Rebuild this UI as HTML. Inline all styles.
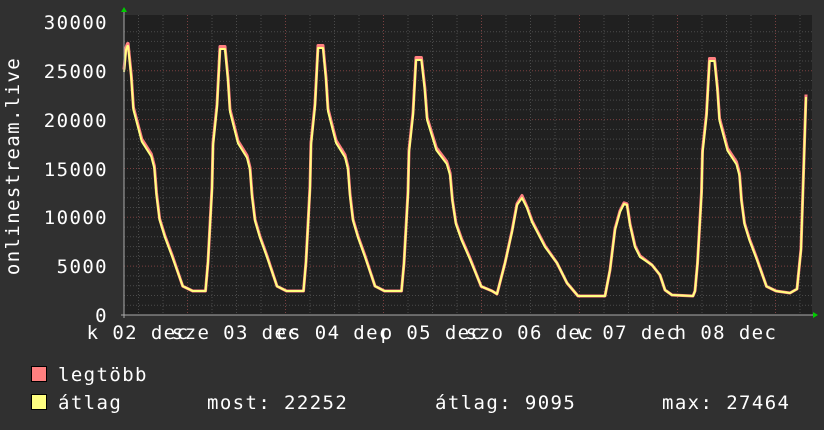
<!DOCTYPE html>
<html><head><meta charset="utf-8"><style>
html,body{margin:0;padding:0;background:#303030;width:824px;height:430px;overflow:hidden}
svg{display:block}
text{font-family:"DejaVu Sans Mono","Liberation Mono",monospace;font-size:19px;letter-spacing:1.4px;fill:#fff}
</style></head><body>
<svg id="g" width="824" height="430" xmlns="http://www.w3.org/2000/svg">
<rect x="0" y="0" width="824" height="430" fill="#303030"/>
<rect x="124" y="15" width="688" height="300" fill="#202020"/>
<g id="grid"></g>
<path id="mx" fill="none" stroke="#ff8080" stroke-width="3" stroke-linejoin="round"/>
<path id="av" fill="none" stroke="#ffff80" stroke-width="2" stroke-linejoin="round"/>
<line x1="121" y1="315" x2="814" y2="315" stroke="#aaa" stroke-width="1"/>
<line x1="124" y1="318" x2="124" y2="12" stroke="#aaa" stroke-width="1"/>
<polygon points="121,12 127,12 124,7" fill="#00cc00"/>
<polygon points="813,312 813,318 818,315" fill="#00cc00"/>
<g text-anchor="end">
<text x="108" y="29">30000</text>
<text x="108" y="78">25000</text>
<text x="108" y="127">20000</text>
<text x="108" y="176">15000</text>
<text x="108" y="224">10000</text>
<text x="108" y="273">5000</text>
<text x="108" y="322">0</text>
</g>
<text transform="translate(19,166) rotate(-90)" text-anchor="middle">onlinestream.live</text>
<g text-anchor="middle">
<text x="138" y="339">k 02 dec</text>
<text x="236" y="339">sze 03 dec</text>
<text x="334" y="339">cs 04 dec</text>
<text x="432" y="339">p 05 dec</text>
<text x="530" y="339">szo 06 dec</text>
<text x="628" y="339">v 07 dec</text>
<text x="726" y="339">h 08 dec</text>
</g>
<rect x="31.5" y="366.5" width="15" height="15" fill="#ff8080" stroke="#000"/>
<rect x="31.5" y="394.5" width="15" height="15" fill="#ffff80" stroke="#000"/>
<text x="58" y="381">legtöbb</text>
<text x="58" y="409">átlag</text>
<text x="207" y="409">most: 22252</text>
<text x="435" y="409">átlag: 9095</text>
<text x="662" y="409">max: 27464</text>
</svg>
<script>
var g=document.getElementById("grid"),h="";
for(var v=1000;v<30000;v+=1000){var y=315-v*0.00977;var maj=v%5000==0;
h+='<line x1="124" x2="812" y1="'+y.toFixed(1)+'" y2="'+y.toFixed(1)+'" stroke="'+(maj?'#7a4040':'#4a4a4a')+'" stroke-dasharray="1,2"/>';}
for(var x=138.5;x<812;x+=24.5){var m=Math.abs(((x-187)/98)-Math.round((x-187)/98))<0.05;
h+='<line y1="15" y2="315" x1="'+x.toFixed(1)+'" x2="'+x.toFixed(1)+'" stroke="'+(m?'#7a4040':'#4a4a4a')+'" stroke-dasharray="1,2"/>';}
g.innerHTML=h;
var tpl=[[-17,0],[-14.5,0.12],[-10.5,0.42],[-9.5,0.6],[-5.5,0.76],[-2.5,1],[2.5,1],[5.5,0.87],[7.5,0.74],[15.5,0.61],[24.5,0.55],[27.5,0.5],[29.5,0.39],[32.5,0.29],[37.5,0.22],[44.5,0.14],[54.5,0.02],[64,0]];
var pts=[[124,72],[126,50],[127.5,46]];
function big(p,py,from,stretch){var base=291;tpl.forEach(function(t){if(t[0]<from)return;var dx=t[0]>0?t[0]*stretch:t[0];pts.push([p+dx,base-(base-py)*t[1]]);});}
big(125.5,46,2,1.05);
big(222.5,49,-17,1);
big(320.5,48,-17,1);
big(418.5,60,-17,1.15);
[[497,294],[505,263],[512,232],[517,205],[522,198],[527,208],[532,222],[545,247],[557,263],[567,283],[578,296],[595,296],[605,296],[610,270],[615,230],[620,212],[624,204],[627,205],[630,225],[635,247],[640,257],[652,265],[660,275],[665,290],[672,295],[693,296]].forEach(function(p){pts.push(p)});
big(712,61,-17,1);
pts.push([790,293]);pts.push([797,289]);pts.push([801,250]);pts.push([804,160]);pts.push([806,97]);
function d(off){return "M"+pts.map(function(p){var o=p[1]<200?off:(p[1]<260?off/2:0);return p[0].toFixed(1)+","+(p[1]-o).toFixed(1)}).join(" L");}
document.getElementById("mx").setAttribute("d",d(2.5));
document.getElementById("av").setAttribute("d",d(0));
</script>
</body></html>
